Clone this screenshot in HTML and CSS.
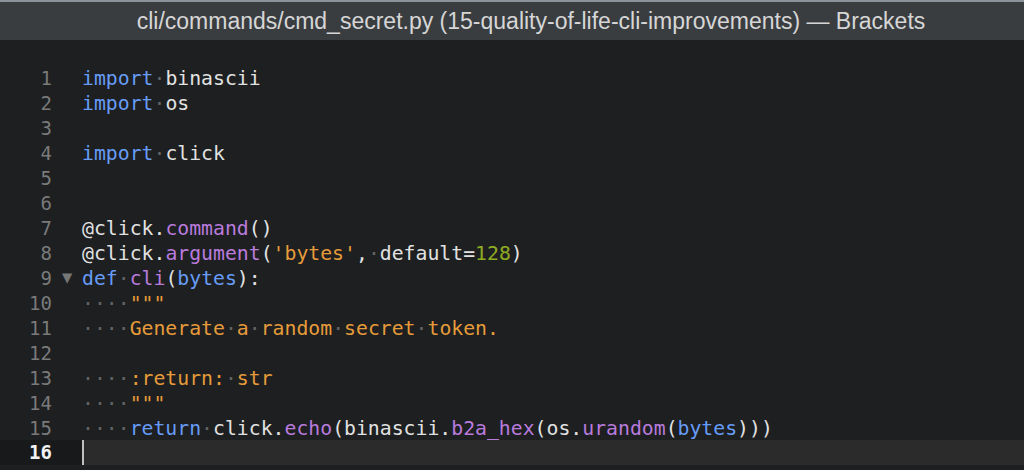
FILE: index.html
```html
<!DOCTYPE html>
<html>
<head>
<meta charset="utf-8">
<link rel="stylesheet" href="styles.css">
</head>
<body>
<div class="titlebar">cli/commands/cmd_secret.py (15-quality-of-life-cli-improvements) — Brackets</div>
<div class="editor">
  <div class="line"><span class="num">1</span><span class="fold"></span><span class="code"><span class="kw">import</span><span class="ws">·</span>binascii</span></div>
  <div class="line"><span class="num">2</span><span class="fold"></span><span class="code"><span class="kw">import</span><span class="ws">·</span>os</span></div>
  <div class="line"><span class="num">3</span><span class="fold"></span><span class="code"></span></div>
  <div class="line"><span class="num">4</span><span class="fold"></span><span class="code"><span class="kw">import</span><span class="ws">·</span>click</span></div>
  <div class="line"><span class="num">5</span><span class="fold"></span><span class="code"></span></div>
  <div class="line"><span class="num">6</span><span class="fold"></span><span class="code"></span></div>
  <div class="line"><span class="num">7</span><span class="fold"></span><span class="code">@click.<span class="fn">command</span>()</span></div>
  <div class="line"><span class="num">8</span><span class="fold"></span><span class="code">@click.<span class="fn">argument</span>(<span class="str">'bytes'</span>,<span class="ws">·</span>default=<span class="numl">128</span>)</span></div>
  <div class="line"><span class="num">9</span><span class="fold">▼</span><span class="code"><span class="kw">def</span><span class="ws">·</span><span class="fn">cli</span>(<span class="kw">bytes</span>):</span></div>
  <div class="line"><span class="num">10</span><span class="fold"></span><span class="code"><span class="ws">····</span><span class="str">"""</span></span></div>
  <div class="line"><span class="num">11</span><span class="fold"></span><span class="code"><span class="ws">····</span><span class="str">Generate</span><span class="ws">·</span><span class="str">a</span><span class="ws">·</span><span class="str">random</span><span class="ws">·</span><span class="str">secret</span><span class="ws">·</span><span class="str">token.</span></span></div>
  <div class="line"><span class="num">12</span><span class="fold"></span><span class="code"></span></div>
  <div class="line"><span class="num">13</span><span class="fold"></span><span class="code"><span class="ws">····</span><span class="str">:return:</span><span class="ws">·</span><span class="str">str</span></span></div>
  <div class="line"><span class="num">14</span><span class="fold"></span><span class="code"><span class="ws">····</span><span class="str">"""</span></span></div>
  <div class="line"><span class="num">15</span><span class="fold"></span><span class="code"><span class="ws">····</span><span class="kw">return</span><span class="ws">·</span>click.<span class="fn">echo</span>(binascii.<span class="fn">b2a_hex</span>(os.<span class="fn">urandom</span>(<span class="kw">bytes</span>)))</span></div>
  <div class="line active"><span class="num">16</span><span class="fold"></span><span class="code"><span class="cursor"></span></span></div>
</div>
</body>
</html>
```

FILE: styles.css
```css
html, body {
  margin: 0;
  padding: 0;
  background: #1d1f21;
  overflow: hidden;
}

.titlebar {
  height: 38px;
  border-top: 2px solid #8c939b;
  background: #3a3d40;
  color: #d6d6d6;
  font-family: "Liberation Sans", Arial, sans-serif;
  font-size: 23px;
  line-height: 38px;
  text-align: center;
  padding-left: 38px;
}

.editor {
  padding-top: 26px;
  font-family: "DejaVu Sans Mono", monospace;
  font-size: 19.8px;
  color: #e2e2e2;
}

.line {
  display: flex;
  height: 25px;
  line-height: 25px;
  white-space: pre;
}

.num {
  width: 52px;
  text-align: right;
  color: #7a7a7a;
  font-size: 19px;
}

.fold {
  width: 30px;
  color: #777;
  font-size: 17px;
  text-align: center;
  line-height: 22px;
}

.code {
  flex: 1;
  display: flex;
  align-items: center;
}

.kw { color: #679cf6; }
.fn { color: #b97bdc; }
.str { color: #e69b3a; }
.numl { color: #8fab22; }
.ws { color: #626466; }

.line.active {
  height: 25px;
  background: #18191b;
  margin-top: -1px;
}

.active .num {
  color: #f2f2f2;
  font-weight: bold;
}

.active .code {
  background: #2b2b2b;
}

.cursor {
  width: 2px;
  height: 25px;
  background: #c0c0c0;
}
```
